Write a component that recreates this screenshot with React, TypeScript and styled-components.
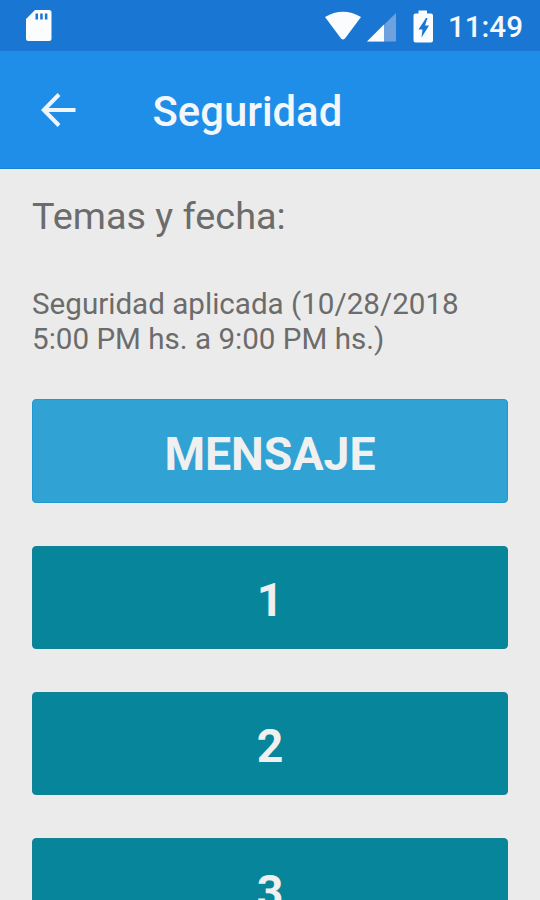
import React from 'react';
import styled, { createGlobalStyle } from 'styled-components';

const GlobalStyle = createGlobalStyle`
  * { box-sizing: border-box; }
  body { margin: 0; background: #ebebeb; font-family: Roboto, "Noto Sans", sans-serif; }
`;

const Screen = styled.div`
  width: 540px;
  height: 900px;
  overflow: hidden;
  display: flex;
  flex-direction: column;
  background: #ebebeb;
`;

const StatusBar = styled.div`
  flex: none;
  height: 51px;
  background: #1976d2;
  color: #f5f8fc;
  display: flex;
  align-items: center;
  justify-content: space-between;
  padding: 0 17px 0 26px;
`;

const StatusGroup = styled.div`
  display: flex;
  align-items: center;
`;

const Clock = styled.span`
  font-size: 29.6px;
  line-height: 51px;
  font-weight: 500;
  margin-left: 13px;
  padding-top: 4px;
`;

const AppBar = styled.header`
  flex: none;
  height: 118px;
  background: #1f8ee8;
  border-bottom: 1px solid #1583da;
  display: flex;
  align-items: center;
  padding-left: 41px;
`;

const BackButton = styled.button`
  border: 0;
  padding: 0;
  background: none;
  width: 111.5px;
  display: flex;
`;

const Title = styled.h1`
  margin: 5px 0 0;
  font-size: 41.8px;
  line-height: 50px;
  font-weight: 500;
  color: #f3f6fa;
`;

const Content = styled.main`
  padding: 23px 32px 0;
  color: #6c6c6c;
`;

const Heading = styled.h2`
  margin: 0;
  font-size: 37.8px;
  line-height: 48px;
  font-weight: 400;
`;

const Description = styled.p`
  margin: 47px 0 42.4px;
  font-size: 29.6px;
  line-height: 35px;
`;

const ButtonList = styled.div`
  display: flex;
  flex-direction: column;
  gap: 42.6px;
`;

const ActionButton = styled.button<{ $tone: string; $edge: string }>`
  height: 103.6px;
  border: 1px solid ${(p) => p.$edge};
  border-radius: 4px;
  padding: 5px 0 0;
  background: ${(p) => p.$tone};
  color: #f0f0f0;
  font: 700 46.4px Roboto, "Noto Sans", sans-serif;
`;

export default function App() {
  return (
    <Screen>
      <GlobalStyle />
      <StatusBar>
        <svg width="26" height="31" viewBox="0 0 26 31">
          <path fillRule="evenodd" fill="#fafcfe" d="M9 0h14a2.5 2.5 0 0 1 2.5 2.5v26A2.5 2.5 0 0 1 23 31H2.5A2.5 2.5 0 0 1 0 28.500V9zM9.500 3.500v6h2.500v-6zm4.700 0v6h2.500v-6zm4.700 0v6h2.500v-6z" />
        </svg>
        <StatusGroup>
          <svg width="110" height="34" viewBox="0 0 110 34">
            <path fill="#fafcfe" d="M0 8Q18-2.500 36 8L20 29.500q-2 2-4 0z" />
            <path fill="#6ea2df" d="M42 32.500 71 4v28.500z" />
            <path fill="#fafcfe" d="M42 32.500 59 15.500v17z" />
            <path fillRule="evenodd" fill="#fafcfe" d="M93.500 1.500h8.500v3h4a2 2 0 0 1 2 2v25a2 2 0 0 1-2 2H90.500a2 2 0 0 1-2-2v-25a2 2 0 0 1 2-2h3zM101 9l-7.500 11.500h4L96.500 28.500l7.500-12h-4l2.500-7.500z" />
          </svg>
          <Clock>11:49</Clock>
        </StatusGroup>
      </StatusBar>
      <AppBar>
        <BackButton aria-label="Atrás">
          <svg width="35" height="34" viewBox="0 0 35 34" fill="none" stroke="#f0f5fa" strokeWidth="4">
            <path d="M34.500 17H3M18 1.500 2.800 17 18 32.500" />
          </svg>
        </BackButton>
        <Title>Seguridad</Title>
      </AppBar>
      <Content>
        <Heading>Temas y fecha:</Heading>
        <Description>Seguridad aplicada (10/28/2018<br />5:00 PM hs. a 9:00 PM hs.)</Description>
        <ButtonList>
          <ActionButton $tone="#30a2d4" $edge="#1d99cf">MENSAJE</ActionButton>
          {['1', '2', '3'].map((n) => (
            <ActionButton key={n} $tone="#07859b" $edge="#128296">{n}</ActionButton>
          ))}
        </ButtonList>
      </Content>
    </Screen>
  );
}
